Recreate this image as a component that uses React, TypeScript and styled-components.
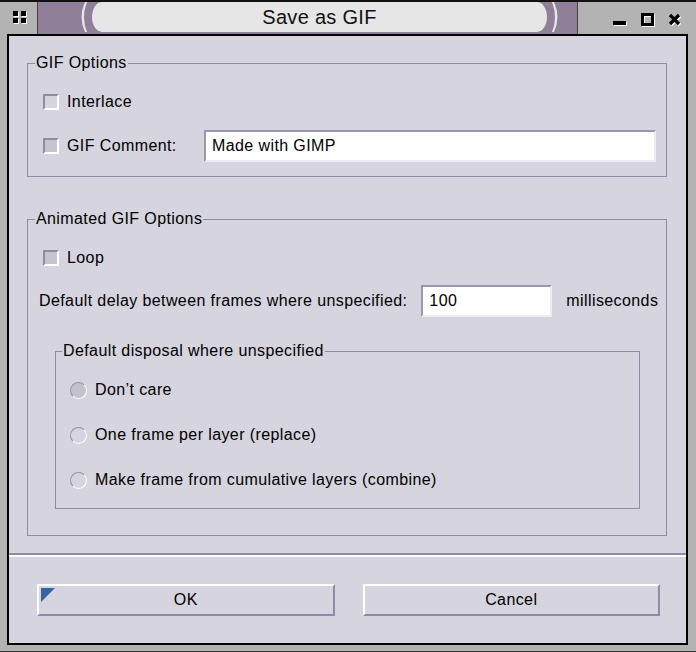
import React from "react";
import styled, { createGlobalStyle } from "styled-components";

const GlobalStyle = createGlobalStyle`
  html, body {
    margin: 0;
    padding: 0;
    background: #000;
  }
  body {
    font-family: "Liberation Sans", Arial, sans-serif;
    font-size: 16px;
    letter-spacing: 0.4px;
    color: #000;
  }
`;

const App: React.FC = () => {
  return (
    <>
      <GlobalStyle />
      <Window>
        <TitleBar>
          <MenuButton>
            <MenuIcon />
          </MenuButton>
          <TitleCenter>
            <Crescent side="left" />
            <TitlePill>Save as GIF</TitlePill>
            <Crescent side="right" />
          </TitleCenter>
          <WindowButtons>
            <MinimizeIcon />
            <MaximizeIcon />
            <CloseIcon />
          </WindowButtons>
        </TitleBar>

        <Client>
          <Sections>
            <Group>
              <Legend>GIF Options</Legend>
              <Rows gap={12}>
                <Row>
                  <CheckBox />
                  <Label>Interlace</Label>
                </Row>
                <Row>
                  <CheckBox shaded />
                  <Label>GIF Comment:</Label>
                  <Entry wide defaultValue="Made with GIMP" />
                </Row>
              </Rows>
            </Group>

            <Group spaced>
              <Legend>Animated GIF Options</Legend>
              <Rows gap={11}>
                <Row>
                  <CheckBox shaded />
                  <Label>Loop</Label>
                </Row>
                <DelayRow>
                  <DelayLabel>Default delay between frames where unspecified:</DelayLabel>
                  <Entry defaultValue="100" />
                  <Label>milliseconds</Label>
                </DelayRow>
              </Rows>

              <InnerGroup>
                <Legend>Default disposal where unspecified</Legend>
                <Rows gap={13}>
                  <Row>
                    <Radio shaded />
                    <Label>Don’t care</Label>
                  </Row>
                  <Row>
                    <Radio />
                    <Label>One frame per layer (replace)</Label>
                  </Row>
                  <Row>
                    <Radio />
                    <Label>Make frame from cumulative layers (combine)</Label>
                  </Row>
                </Rows>
              </InnerGroup>
            </Group>
          </Sections>

          <Separator />

          <ButtonBar>
            <Button>
              <DefaultMark />
              OK
            </Button>
            <Button>Cancel</Button>
          </ButtonBar>
        </Client>
      </Window>
    </>
  );
};

export default App;

/* ---------- icons ---------- */

const MenuIcon = () => (
  <svg width="14" height="13" viewBox="0 0 14 13">
    {[
      [0, 0],
      [8, 0],
      [0, 7],
      [8, 7],
    ].map(([x, y]) => (
      <g key={`${x}-${y}`}>
        <rect x={x + 1} y={y + 1} width="5" height="5" fill="#fff" />
        <rect x={x} y={y} width="5" height="5" fill="#000" />
      </g>
    ))}
  </svg>
);

const MinimizeIcon = () => (
  <svg width="15" height="14" viewBox="0 0 15 14">
    <rect x="1" y="9" width="13" height="4" fill="#fff" />
    <rect x="0" y="8" width="13" height="4" fill="#000" />
  </svg>
);

const MaximizeIcon = () => (
  <svg width="14" height="14" viewBox="0 0 14 14">
    <rect x="2.5" y="2.5" width="10" height="10" fill="none" stroke="#fff" strokeWidth="3" />
    <rect x="1.5" y="1.5" width="10" height="10" fill="none" stroke="#000" strokeWidth="3" />
  </svg>
);

const CloseIcon = () => (
  <svg width="15" height="14" viewBox="0 0 15 14">
    <path d="M3 3 L12 12 M12 3 L3 12" stroke="#fff" strokeWidth="3.2" fill="none" />
    <path d="M2 2 L11 11 M11 2 L2 11" stroke="#000" strokeWidth="3.2" fill="none" />
  </svg>
);

const Crescent: React.FC<{ side: "left" | "right" }> = ({ side }) => (
  <CrescentSvg width="13" height="30" viewBox="0 0 13 30" flip={side === "right"}>
    <path d="M6 0 Q-1 15 6 30 L8 30 Q2 15 8 0 Z" fill="#e6e6e6" />
  </CrescentSvg>
);

/* ---------- window frame ---------- */

const Window = styled.div`
  width: 696px;
  height: 652px;
  box-sizing: border-box;
  background: #b3b3b3;
  border-top: 2px solid #111;
  border-bottom: 1px solid #333;
  padding: 0 3px 6px 2px;
  display: flex;
  flex-direction: column;
`;

const TitleBar = styled.div`
  height: 32px;
  display: flex;
  flex-shrink: 0;
`;

const MenuButton = styled.div`
  width: 36px;
  background: #b3b3b3;
  border-right: 1px solid #4a3f3a;
  display: flex;
  align-items: center;
  justify-content: center;
  padding-bottom: 2px;
  box-sizing: border-box;
`;

const TitleCenter = styled.div`
  flex: 1;
  background: #8f7f99;
  display: flex;
  padding: 0 17px 2px 41px;
`;

const CrescentSvg = styled.svg<{ flip: boolean }>`
  display: block;
  flex-shrink: 0;
  transform: ${(p) => (p.flip ? "scaleX(-1)" : "none")};
`;

const TitlePill = styled.div`
  flex: 1;
  background: #e6e6e6;
  border-radius: 10px / 50%;
  display: flex;
  align-items: center;
  justify-content: center;
  font-size: 20px;
  color: #111;
  letter-spacing: 0.3px;
`;

const WindowButtons = styled.div`
  width: 116px;
  background: #b3b3b3;
  border-left: 1px solid #4a3f3a;
  display: flex;
  align-items: center;
  justify-content: flex-end;
  gap: 13px;
  padding: 4px 10px 0 0;
  box-sizing: border-box;
`;

const Client = styled.div`
  flex: 1;
  margin: 0 5px;
  border: 2px solid #000;
  background: #d6d4de;
  display: flex;
  flex-direction: column;
`;

/* ---------- groups ---------- */

const Sections = styled.div`
  padding: 19px 19px 0 18px;
  display: flex;
  flex-direction: column;
`;

const Group = styled.fieldset<{ spaced?: boolean }>`
  margin: ${(p) => (p.spaced ? "34px 0 0" : "0")};
  border: 1px solid #8c8ca6;
  padding: 15px 10px 14px 15px;
  min-width: 0;
`;

const InnerGroup = styled.fieldset`
  margin: 26px 16px 12px 12px;
  border: 1px solid #8c8ca6;
  padding: 15px 10px 12px 14px;
  min-width: 0;
`;

const Legend = styled.legend`
  margin-left: -8px;
  padding: 0 1px;
  line-height: 16px;
  font-size: 16px;
`;

const Rows = styled.div<{ gap: number }>`
  display: flex;
  flex-direction: column;
  gap: ${(p) => p.gap}px;
`;

const Row = styled.div`
  height: 32px;
  display: flex;
  align-items: center;
  gap: 8px;
`;

const DelayRow = styled(Row)`
  margin-left: -4px;
  gap: 14px;
`;

const Label = styled.span`
  white-space: nowrap;
`;

const DelayLabel = styled(Label)`
  flex: 1;
`;

/* ---------- controls ---------- */

const CheckBox = styled.span<{ shaded?: boolean }>`
  width: 16px;
  height: 16px;
  box-sizing: border-box;
  flex-shrink: 0;
  background: ${(p) => (p.shaded ? "#c6c4ce" : "#d6d4de")};
  border: 2px solid;
  border-color: #8c8ca6 #fff #fff #8c8ca6;
`;

const Radio = styled.span<{ shaded?: boolean }>`
  width: 17px;
  height: 17px;
  box-sizing: border-box;
  flex-shrink: 0;
  border-radius: 50%;
  background: ${(p) => (p.shaded ? "#c3c1cb" : "#d6d4de")};
  border: 1.5px solid;
  border-color: #9494ac #fff #fff #9494ac;
`;

const Entry = styled.input<{ wide?: boolean }>`
  box-sizing: border-box;
  height: 32px;
  width: ${(p) => (p.wide ? "452px" : "131px")};
  margin-left: ${(p) => (p.wide ? "auto" : "0")};
  flex-shrink: 0;
  background: #fff;
  border: 2px solid;
  border-color: #9896b0 #ececf6 #ececf6 #9896b0;
  padding: 0 6px;
  font-family: "Liberation Sans", Arial, sans-serif;
  font-size: 16px;
  letter-spacing: 0.4px;
  color: #000;
  outline: none;
`;

const Separator = styled.div`
  margin-top: 17px;
  height: 2px;
  background: #8c8ca6;
  border-bottom: 2px solid #fff;
`;

const ButtonBar = styled.div`
  display: grid;
  grid-template-columns: 1fr 1fr;
  gap: 28px;
  padding: 27px 26px 0 28px;
`;

const Button = styled.button`
  position: relative;
  height: 32px;
  background: #d6d4de;
  border: 2px solid;
  border-color: #fff #8c8ca6 #8c8ca6 #fff;
  font-family: "Liberation Sans", Arial, sans-serif;
  font-size: 16px;
  letter-spacing: 0.4px;
  color: #000;
  padding: 0;
`;

const DefaultMark = styled.span`
  position: absolute;
  left: 2px;
  top: 2px;
  width: 0;
  height: 0;
  border-top: 14px solid #3b63a0;
  border-right: 14px solid transparent;
`;
